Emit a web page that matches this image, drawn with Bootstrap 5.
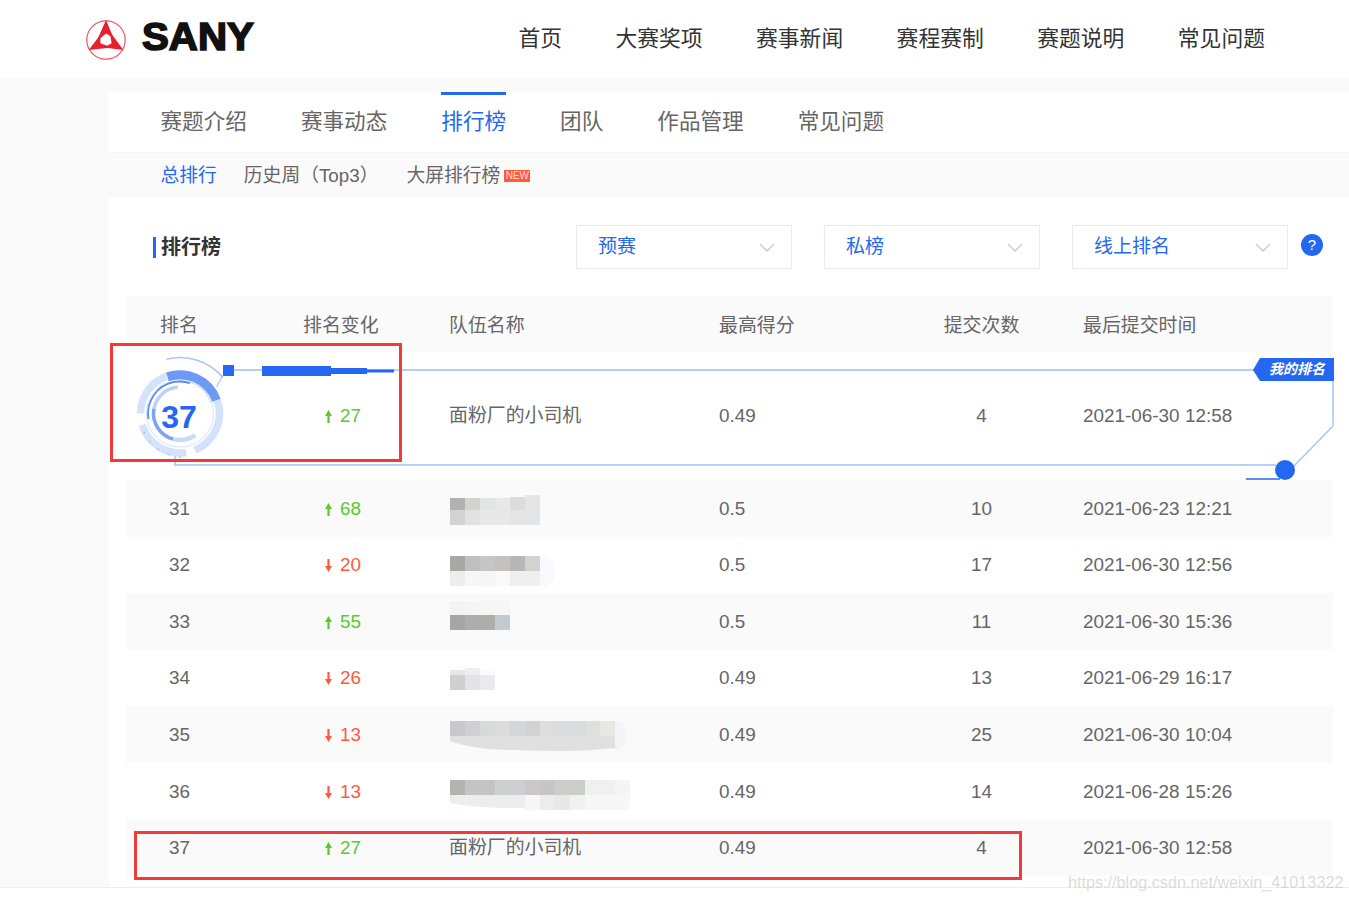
<!DOCTYPE html>
<html lang="zh-CN">
<head>
    <meta charset="UTF-8">
    <meta name="viewport" content="width=device-width, initial-scale=1.0">
    <title>排行榜</title>
    <link href="https://cdn.jsdelivr.net/npm/bootstrap@5.3.0/dist/css/bootstrap.min.css" rel="stylesheet">
    <style>
        body {
            font-family: "Liberation Sans", "Noto Sans CJK SC", sans-serif;
            color: #666;
            background: #fff;
            min-height: 900px;
            position: relative;
            overflow: hidden;
        }
        .site-head { height: 78px; padding: 0 84px 0 86px; }
        .logo-mark { margin-top: 1px; overflow: visible; }
        .logo-word {
            font-size: 38px;
            font-weight: 700;
            color: #111;
            -webkit-text-stroke: 1.6px #111;
            line-height: 1;
            margin: 0 0 4px 16px;
            display: inline-block;
            transform: scaleX(1.06);
            transform-origin: left center;
        }
        .site-nav { gap: 53.4px; font-size: 21.8px; color: #333; }
        .page-wrap { background: #fafafa; height: 810px; padding: 14px 0 0 109px; border-bottom: 1px solid #eee; }
        .panel-main { background: #fff; height: 795px; }
        .tab-row { height: 61px; gap: 54px; padding-left: 51.5px; font-size: 21.6px; border-bottom: 1px solid #f3f3f8; }
        .tab-item { padding-top: 12px; line-height: 30px; border-top: 3px solid transparent; }
        .tab-on { color: #2468f2; border-top-color: #2468f2; }
        .sub-row { height: 44px; background: #fafafa; padding: 3px 0 0 51.5px; font-size: 18.8px; color: #666; }
        .sub-on { color: #2468f2; margin-right: 27px; }
        .sub-mid { margin-right: 28px; }
        .new-tag {
            background: #ff5a3c; color: #fdd; font-size: 10px; line-height: 12px;
            width: 26px; text-align: center; margin-left: 4px; margin-top: -1px;
        }
        .tool-row { height: 99px; padding: 1px 26px 0 44px; }
        .title-main { border-left: 3px solid #2468f2; padding-left: 5px; font-size: 20px; line-height: 21px; font-weight: 700; color: #333; }
        .pick-box {
            width: 216px; height: 44px; border: 1.5px solid #e8eafb; color: #2468f2;
            font-size: 19px; padding: 0 16px 0 21px; margin-left: 32px;
        }
        .help-dot {
            width: 22px; height: 22px; border-radius: 50%; background: #2468f2; color: #fff;
            font-size: 15px; font-weight: 400; margin: 0 0 4px 13px;
        }
        .rank-table { width: 1207px; margin: 0 0 0 17px; table-layout: fixed; font-size: 18.9px; --bs-table-bg: transparent; --bs-table-color: #666; }
        .rank-table th, .rank-table td { padding: 1px 0 0; vertical-align: middle; font-weight: 400; color: #666; }
        .rank-table th { padding-top: 4px; }
        .rank-table thead tr { height: 56px; background: #fafafa; }
        .rank-table tbody tr { height: 56.6px; }
        .rank-table tbody tr.line-alt { background: #fafafa; }
        .rank-table tbody tr.line-me { height: 128px; }
        .col-rank { width: 177px; padding-left: 34px !important; }
        .col-change { width: 146px; }
        .col-team { width: 270px; }
        .col-score { width: 206px; }
        .col-count { width: 113px; text-align: center; }
        .col-time { padding-left: 45px !important; }
        td.col-rank { padding-left: 43px !important; }
        td.col-change { padding-left: 22px !important; }
        .rank-table td.up-num { color: #5cc92c; }
        .rank-table td.down-num { color: #ff5a40; }
        .up-num svg, .down-num svg { margin-right: 8px; vertical-align: -1px; }
        .rank-table td.col-team-blur { padding: 0; }
        .team-blur { display: block; }
        .me-rank {
            position: relative; z-index: 2; display: inline-block; width: 70px; margin-left: -25px;
            text-align: center; color: #2468f2; font-size: 32px; font-weight: 700;
        }
        .deco-layer { position: absolute; left: 0; top: 0; pointer-events: none; }
        .deco-tag { font-family: "Noto Sans CJK SC", sans-serif; font-size: 14px; font-weight: 700; font-style: italic; fill: #fff; }
        .mark-box { position: absolute; border: 3px solid #f23a3a; pointer-events: none; }
        .mark-a { left: 110px; top: 343px; width: 292px; height: 119px; }
        .mark-b { left: 134px; top: 831px; width: 888px; height: 49px; }
        .water-mark { position: absolute; left: 1068px; top: 872px; font-size: 16.2px; color: rgba(190, 190, 190, .55); line-height: 21px; white-space: nowrap; }
    </style>
</head>
<body>
    <header class="site-head d-flex align-items-center justify-content-between bg-white">
        <div class="d-flex align-items-center">
            <svg class="logo-mark" width="40" height="40" viewBox="0 0 40 40">
                <circle cx="20" cy="20" r="19.2" fill="none" stroke="#ee5560" stroke-width="1.2"/>
                <g fill="#e8202e">
                    <path id="blade" d="M20 0L27.500 18L20 13.500L10.500 21.500Z"/>
                    <use href="#blade" transform="rotate(120 20 20)"/>
                    <use href="#blade" transform="rotate(240 20 20)"/>
                </g>
            </svg>
            <span class="logo-word">SANY</span>
        </div>
        <nav class="site-nav d-flex">
            <span>首页</span><span>大赛奖项</span><span>赛事新闻</span><span>赛程赛制</span><span>赛题说明</span><span>常见问题</span>
        </nav>
    </header>

    <div class="page-wrap">
        <div class="panel-main">
            <div class="tab-row d-flex">
                <div class="tab-item">赛题介绍</div>
                <div class="tab-item">赛事动态</div>
                <div class="tab-item tab-on">排行榜</div>
                <div class="tab-item">团队</div>
                <div class="tab-item">作品管理</div>
                <div class="tab-item">常见问题</div>
            </div>
            <div class="sub-row d-flex align-items-center">
                <span class="sub-on">总排行</span>
                <span class="sub-mid">历史周（Top3）</span>
                <span>大屏排行榜</span>
                <span class="new-tag">NEW</span>
            </div>
            <div class="tool-row d-flex align-items-center">
                <div class="title-main me-auto">排行榜</div>
                <div class="pick-box d-flex align-items-center justify-content-between"><span>预赛</span>
                    <svg width="16" height="9" viewBox="0 0 16 9"><path d="M1 1l7 7 7-7" fill="none" stroke="#c5c9d3" stroke-width="1.3"/></svg></div>
                <div class="pick-box d-flex align-items-center justify-content-between"><span>私榜</span>
                    <svg width="16" height="9" viewBox="0 0 16 9"><path d="M1 1l7 7 7-7" fill="none" stroke="#c5c9d3" stroke-width="1.3"/></svg></div>
                <div class="pick-box d-flex align-items-center justify-content-between"><span>线上排名</span>
                    <svg width="16" height="9" viewBox="0 0 16 9"><path d="M1 1l7 7 7-7" fill="none" stroke="#c5c9d3" stroke-width="1.3"/></svg></div>
                <div class="help-dot d-flex align-items-center justify-content-center">?</div>
            </div>

            <table class="table table-borderless rank-table">
                <thead>
                    <tr>
                        <th class="col-rank">排名</th>
                        <th class="col-change">排名变化</th>
                        <th class="col-team">队伍名称</th>
                        <th class="col-score">最高得分</th>
                        <th class="col-count">提交次数</th>
                        <th class="col-time">最后提交时间</th>
                    </tr>
                </thead>
                <tbody>
                    <tr class="line-me">
                        <td class="col-rank"><span class="me-rank">37</span></td>
                        <td class="col-change up-num"><svg width="7" height="13" viewBox="0 0 7 13"><path d="M3.500 0L7 6H4.600V13H2.400V6H0Z" fill="currentColor"/></svg>27</td>
                        <td class="col-team">面粉厂的小司机</td>
                        <td class="col-score">0.49</td>
                        <td class="col-count">4</td>
                        <td class="col-time">2021-06-30 12:58</td>
                    </tr>
                    <tr class="line-alt">
                        <td class="col-rank">31</td>
                        <td class="col-change up-num"><svg width="7" height="13" viewBox="0 0 7 13"><path d="M3.500 0L7 6H4.600V13H2.400V6H0Z" fill="currentColor"/></svg>68</td>
                        <td class="col-team col-team-blur"><svg class="team-blur" width="190" height="56" viewBox="0 0 190 56">
                            <rect x="1" y="18" width="15" height="12" fill="#b2b2b2"/><rect x="16" y="18" width="15" height="12" fill="#d4d3d2"/><rect x="31" y="18" width="15" height="12" fill="#e2e5e4"/><rect x="46" y="18" width="15" height="12" fill="#e8e8e8"/><rect x="61" y="17" width="15" height="13" fill="#dcdcdc"/><rect x="76" y="15" width="15" height="15" fill="#e4e6e5"/>
                            <rect x="1" y="30" width="15" height="15" fill="#d2d2d2"/><rect x="16" y="30" width="15" height="15" fill="#e2e2e2"/><rect x="31" y="30" width="30" height="15" fill="#e8e8e8"/><rect x="61" y="30" width="15" height="15" fill="#e5e5e5"/><rect x="76" y="30" width="15" height="15" fill="#e4e5e6"/>
                        </svg></td>
                        <td class="col-score">0.5</td>
                        <td class="col-count">10</td>
                        <td class="col-time">2021-06-23 12:21</td>
                    </tr>
                    <tr>
                        <td class="col-rank">32</td>
                        <td class="col-change down-num"><svg width="7" height="13" viewBox="0 0 7 13"><path d="M3.500 13L7 7H4.600V0H2.400V7H0Z" fill="currentColor"/></svg>20</td>
                        <td class="col-team col-team-blur"><svg class="team-blur" width="190" height="56" viewBox="0 0 190 56">
                            <rect x="86" y="19" width="20" height="30" rx="14" fill="#f8f9fc"/>
                            <rect x="1" y="19" width="15" height="15" fill="#a9a8a6"/><rect x="16" y="19" width="15" height="15" fill="#bfbfbf"/><rect x="31" y="19" width="15" height="15" fill="#c6c6c6"/><rect x="46" y="19" width="15" height="15" fill="#c4c2be"/><rect x="61" y="19" width="15" height="15" fill="#b6b8b8"/><rect x="76" y="19" width="15" height="15" fill="#d2d2d0"/>
                            <rect x="1" y="34" width="15" height="15" fill="#ededed"/><rect x="16" y="34" width="15" height="15" fill="#f7f7f7"/><rect x="31" y="34" width="15" height="15" fill="#f6f6f5"/><rect x="46" y="34" width="15" height="15" fill="#f9f9f7"/><rect x="61" y="34" width="15" height="15" fill="#efefef"/><rect x="76" y="34" width="15" height="15" fill="#efefee"/>
                        </svg></td>
                        <td class="col-score">0.5</td>
                        <td class="col-count">17</td>
                        <td class="col-time">2021-06-30 12:56</td>
                    </tr>
                    <tr class="line-alt">
                        <td class="col-rank">33</td>
                        <td class="col-change up-num"><svg width="7" height="13" viewBox="0 0 7 13"><path d="M3.500 0L7 6H4.600V13H2.400V6H0Z" fill="currentColor"/></svg>55</td>
                        <td class="col-team col-team-blur"><svg class="team-blur" width="190" height="56" viewBox="0 0 190 56">
                            <rect x="1" y="8" width="15" height="14" fill="#f3f3f3"/><rect x="16" y="8" width="15" height="14" fill="#f5f5f5"/><rect x="31" y="8" width="15" height="14" fill="#f6f6f6"/><rect x="46" y="8" width="15" height="14" fill="#f5f6f8"/>
                            <rect x="1" y="22" width="15" height="15" fill="#a6a6a6"/><rect x="16" y="22" width="15" height="15" fill="#aeadae"/><rect x="31" y="22" width="15" height="15" fill="#aeada9"/><rect x="46" y="22" width="15" height="15" fill="#c4cbd0"/>
                        </svg></td>
                        <td class="col-score">0.5</td>
                        <td class="col-count">11</td>
                        <td class="col-time">2021-06-30 15:36</td>
                    </tr>
                    <tr>
                        <td class="col-rank">34</td>
                        <td class="col-change down-num"><svg width="7" height="13" viewBox="0 0 7 13"><path d="M3.500 13L7 7H4.600V0H2.400V7H0Z" fill="currentColor"/></svg>26</td>
                        <td class="col-team col-team-blur"><svg class="team-blur" width="190" height="56" viewBox="0 0 190 56">
                            <rect x="1" y="20" width="15" height="5" fill="#e8e6e6"/><rect x="16" y="18" width="15" height="7" fill="#eeeeee"/><rect x="31" y="19" width="15" height="6" fill="#fafafa"/>
                            <rect x="1" y="25" width="15" height="15" fill="#d0cfce"/><rect x="16" y="25" width="15" height="15" fill="#e4e4e7"/><rect x="31" y="25" width="15" height="15" fill="#ebebef"/>
                        </svg></td>
                        <td class="col-score">0.49</td>
                        <td class="col-count">13</td>
                        <td class="col-time">2021-06-29 16:17</td>
                    </tr>
                    <tr class="line-alt">
                        <td class="col-rank">35</td>
                        <td class="col-change down-num"><svg width="7" height="13" viewBox="0 0 7 13"><path d="M3.500 13L7 7H4.600V0H2.400V7H0Z" fill="currentColor"/></svg>13</td>
                        <td class="col-team col-team-blur"><svg class="team-blur" width="190" height="56" viewBox="0 0 190 56">
                            <rect x="160" y="14" width="17" height="29" rx="12" fill="#f3f4f8"/>
                            <rect x="1" y="14" width="15" height="15" fill="#c9c8cb"/><rect x="16" y="14" width="15" height="15" fill="#d0d0d3"/><rect x="31" y="14" width="15" height="15" fill="#d8dada"/><rect x="46" y="14" width="15" height="15" fill="#dcdcdc"/><rect x="61" y="14" width="15" height="15" fill="#d4d6da"/><rect x="76" y="14" width="15" height="15" fill="#d2d2d3"/><rect x="91" y="14" width="15" height="15" fill="#dfdddb"/><rect x="106" y="14" width="15" height="15" fill="#d9dde0"/><rect x="121" y="14" width="15" height="15" fill="#d8dcdc"/><rect x="136" y="14" width="15" height="15" fill="#dfdfdd"/><rect x="151" y="14" width="15" height="15" fill="#e8e7e5"/>
                            <path d="M1 29h165v12q-30 3-50 3t-50-1q-40 0-65-9Z" fill="#e0e0e0"/>
                        </svg></td>
                        <td class="col-score">0.49</td>
                        <td class="col-count">25</td>
                        <td class="col-time">2021-06-30 10:04</td>
                    </tr>
                    <tr>
                        <td class="col-rank">36</td>
                        <td class="col-change down-num"><svg width="7" height="13" viewBox="0 0 7 13"><path d="M3.500 13L7 7H4.600V0H2.400V7H0Z" fill="currentColor"/></svg>13</td>
                        <td class="col-team col-team-blur"><svg class="team-blur" width="190" height="56" viewBox="0 0 190 56">
                            <rect x="1" y="17" width="15" height="15" fill="#b4b3b0"/><rect x="16" y="17" width="30" height="15" fill="#c4c4c2"/><rect x="46" y="17" width="30" height="15" fill="#cdcfd0"/><rect x="76" y="17" width="15" height="15" fill="#cbc8c8"/><rect x="91" y="17" width="15" height="15" fill="#c6c5c8"/><rect x="106" y="17" width="15" height="15" fill="#cdcdca"/><rect x="121" y="17" width="15" height="15" fill="#cbcdcb"/><rect x="136" y="17" width="30" height="15" fill="#f0f0f0"/><rect x="166" y="17" width="15" height="15" fill="#f5f5f5"/>
                            <path d="M1 32h75v13q-45 1-75-5Z" fill="#eceeee"/><rect x="76" y="32" width="15" height="15" fill="#f6f6f6"/><rect x="91" y="32" width="15" height="15" fill="#ececee"/><rect x="106" y="32" width="15" height="15" fill="#e8e8e8"/><rect x="121" y="32" width="15" height="15" fill="#f1f1f1"/><rect x="136" y="32" width="45" height="15" fill="#f7f7f7"/>
                        </svg></td>
                        <td class="col-score">0.49</td>
                        <td class="col-count">14</td>
                        <td class="col-time">2021-06-28 15:26</td>
                    </tr>
                    <tr class="line-alt">
                        <td class="col-rank">37</td>
                        <td class="col-change up-num"><svg width="7" height="13" viewBox="0 0 7 13"><path d="M3.500 0L7 6H4.600V13H2.400V6H0Z" fill="currentColor"/></svg>27</td>
                        <td class="col-team">面粉厂的小司机</td>
                        <td class="col-score">0.49</td>
                        <td class="col-count">4</td>
                        <td class="col-time">2021-06-30 12:58</td>
                    </tr>
                </tbody>
            </table>
        </div>
    </div>

    <!-- my-rank frame drawn over the table -->
    <svg class="deco-layer" width="1349" height="900" viewBox="0 0 1349 900">
        <g fill="none" stroke="#b9cffb" stroke-width="2">
            <path d="M234 370H1256"/>
            <path d="M175 452V465H1276"/>
        </g>
        <path d="M1333 380V426L1293 467" fill="none" stroke="#a9c4fa" stroke-width="1.5"/>
        <path d="M1246 479H1280" stroke="#2468f2" stroke-width="1.5"/>
        <circle cx="1285" cy="470" r="10" fill="#2468f2"/>
        <path d="M1253 370L1260 358H1334V381H1260Z" fill="#2468f2"/>
        <text class="deco-tag" x="1269" y="374">我的排名</text>
        <rect x="223" y="365" width="11" height="11" fill="#2468f2"/>
        <path d="M262 366H331V368H367V369.500H394V372.500H367V374H331V376H262Z" fill="#2468f2"/>
        <path d="M216.500 387L223 375" stroke="#a9c4fa" stroke-width="1.2"/>
        <g fill="none" transform="translate(180 413.500)">
            <circle r="56" pathLength="360" stroke="#a9c4fa" stroke-width="1.5" stroke-dasharray="64 296" transform="rotate(-104)"/>
            <circle r="39.500" pathLength="360" stroke="#d5e2fc" stroke-width="7.500" stroke-dasharray="70 290" transform="rotate(180)"/>
            <circle r="39.500" pathLength="360" stroke="#d5e2fc" stroke-width="7.500" stroke-dasharray="88 272" transform="rotate(-20)"/>
            <circle r="39.500" pathLength="360" stroke="#d5e2fc" stroke-width="7.500" stroke-dasharray="82 278" transform="rotate(81)"/>
            <circle r="38" pathLength="360" stroke="#6d9af5" stroke-width="10.500" stroke-dasharray="89 271" transform="rotate(-109)"/>
            <circle r="33.500" stroke="#e3ecfd" stroke-width="1.500"/>
            <circle r="32" pathLength="360" stroke="#5b8bf0" stroke-width="1.800" stroke-dasharray="118 242" transform="rotate(170)"/>
            <circle r="26.500" pathLength="360" stroke="#bcd0fa" stroke-width="3.500" stroke-dasharray="75 285" transform="rotate(190)"/>
            <circle r="26.500" pathLength="360" stroke="#7ba4f5" stroke-width="3.500" stroke-dasharray="85 275" transform="rotate(105)"/>
            <circle r="26.500" pathLength="360" stroke="#c9daf9" stroke-width="4.500" stroke-dasharray="50 310" transform="rotate(55)"/>
        </g>
        <g fill="#a9c4fa">
            <circle cx="144.300" cy="432.700" r="1"/><circle cx="150" cy="441.700" r="1"/><circle cx="158.300" cy="449.300" r="1"/><circle cx="168.300" cy="454.300" r="1"/><circle cx="180" cy="457.300" r="1"/>
        </g>
    </svg>

    <div class="mark-box mark-a"></div>
    <div class="mark-box mark-b"></div>
    <div class="water-mark">https://blog.csdn.net/weixin_41013322</div>

    <script src="https://cdn.jsdelivr.net/npm/bootstrap@5.3.0/dist/js/bootstrap.bundle.min.js"></script>
</body>
</html>
